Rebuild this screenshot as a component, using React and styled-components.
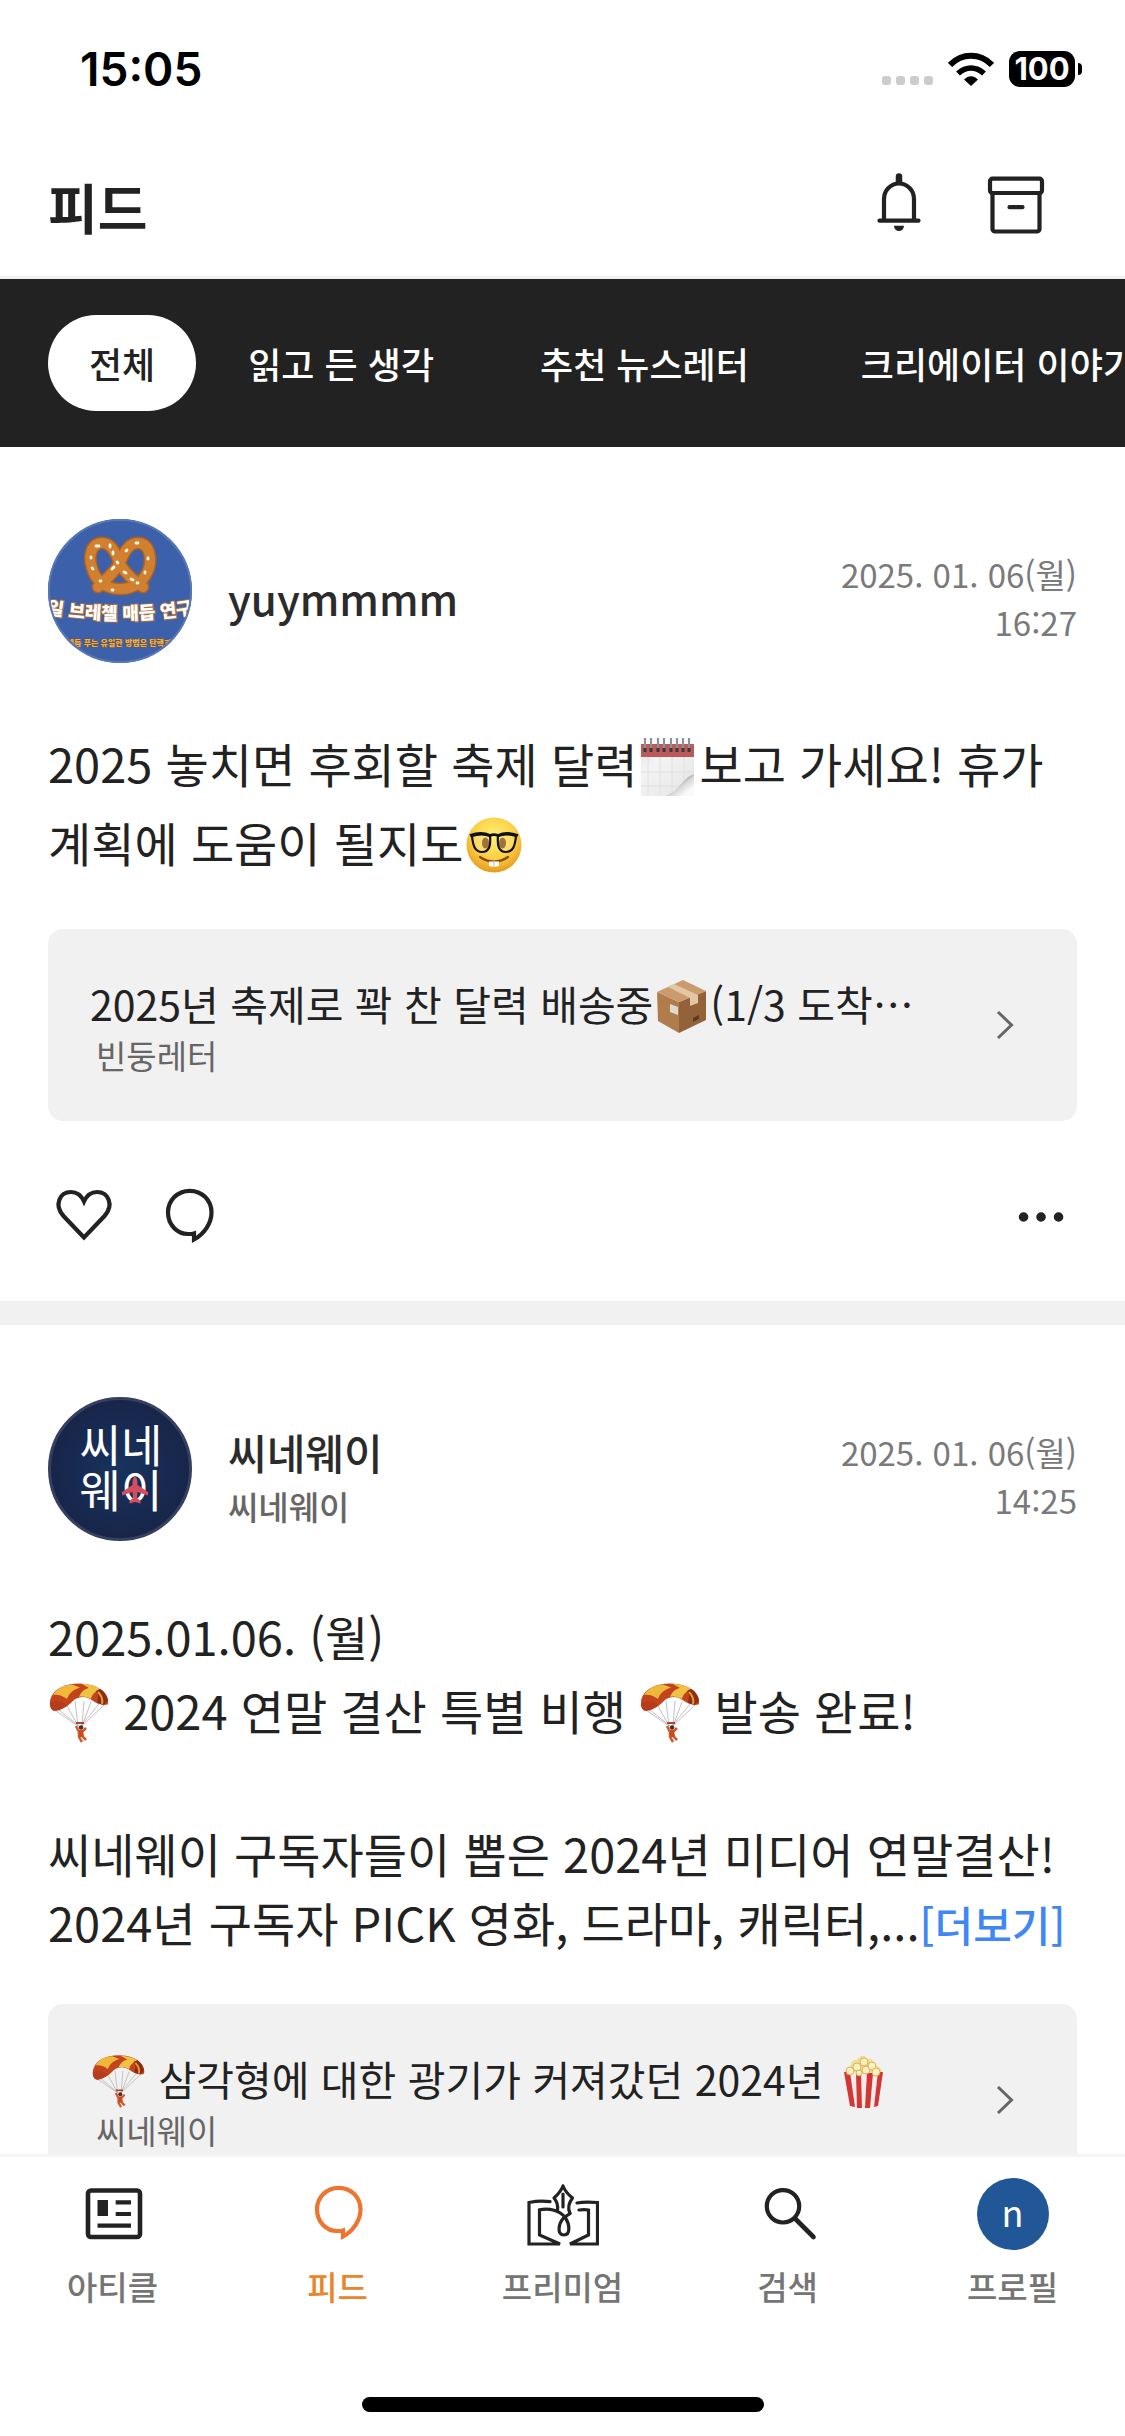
import React, { useState } from 'react';
import styled, { createGlobalStyle } from 'styled-components';

const GlobalStyle = createGlobalStyle`
  * {
    box-sizing: border-box;
    margin: 0;
    padding: 0;
  }
  body {
    background: #fff;
    color: #222;
    font-family: 'Noto Sans CJK KR', 'Noto Sans', sans-serif;
  }
  button {
    border: 0;
    background: none;
    color: inherit;
    font: inherit;
    cursor: pointer;
  }
  a {
    color: inherit;
    text-decoration: none;
  }
  svg {
    display: block;
    flex: none;
  }
`;

const StyledApp = styled.div`
  display: flex;
  flex-direction: column;
  height: 100vh;
  overflow: hidden;
`;

const StatusBar = styled.div`
  display: flex;
  justify-content: space-between;
  align-items: center;
  flex: none;
  height: 132px;
  padding: 6px 43px 0 80px;
  color: #000;
  font-family: Inter, sans-serif;
  font-size: 46px;
  font-weight: 600;
  .status {
    display: flex;
    align-items: center;
  }
  .signal {
    display: flex;
    gap: 5px;
    margin: 23px 15px 0 0;
    i {
      width: 9px;
      height: 9px;
      border-radius: 3px;
      background: #ccc;
    }
  }
  .battery {
    width: 66px;
    margin-left: 15px;
    border-radius: 11px;
    background: #000;
    color: #fff;
    font-size: 31px;
    font-weight: 700;
    line-height: 36px;
    text-align: center;
  }
  .nub {
    width: 4px;
    height: 12px;
    margin-left: 3px;
    border-radius: 0 4px 4px 0;
    background: #000;
  }
`;

const Header = styled.header`
  display: flex;
  justify-content: space-between;
  align-items: center;
  flex: none;
  height: 147px;
  padding: 0 73px 0 48px;
  border-bottom: 3px solid #f0f0f0;
  h1 {
    padding-top: 5px;
    font-size: 54px;
    font-weight: 700;
    line-height: 78px;
  }
  div {
    display: flex;
    gap: 45px;
  }
`;

const Tabs = styled.nav`
  display: flex;
  flex: none;
  gap: 12px;
  padding: 36px 48px;
  overflow: hidden;
  background: #222;
`;

const Tab = styled.button`
  flex: none;
  height: 96px;
  padding: 0 ${({ $pad }) => $pad}px;
  border-radius: 48px;
  background: ${({ $on }) => ($on ? '#fff' : 'transparent')};
  color: ${({ $on }) => ($on ? '#222' : '#fff')};
  font-size: 36px;
  font-weight: 500;
`;

const Feed = styled.main`
  flex: 1;
  min-height: 0;
  overflow-y: auto;
  scrollbar-width: none;
`;

const StyledPost = styled.article`
  padding: 72px 48px 48px;
  border-bottom: 24px solid #f1f1f1;
`;

const PostHead = styled.div`
  display: flex;
  align-items: center;
  gap: 36px;
  height: 144px;
  .writer {
    flex: 1;
    padding-top: 14px;
    color: #2b2b2b;
  }
  h2 {
    font-size: 42px;
    font-weight: 500;
    line-height: 60px;
  }
  p {
    color: #666;
    font-size: 33px;
    font-weight: 500;
    line-height: 48px;
  }
  time {
    padding-top: 14px;
    color: #7a7a7a;
    font-size: 33px;
    line-height: 48px;
    text-align: right;
  }
`;

const PostBody = styled.div`
  padding: 60px 0 48px;
  font-size: 47px;
  line-height: 69px;
  word-break: keep-all;
  p {
    min-height: 69px;
  }
  a {
    color: #3f87f2;
    font-size: 42px;
    font-weight: 500;
    line-height: 48px;
  }
`;

const Emoji = styled.svg`
  display: inline-block;
  width: ${({ $small }) => ($small ? 53 : 60)}px;
  height: ${({ $small }) => ($small ? 53 : 60)}px;
  margin: ${({ $small }) => ($small ? '0 2px' : '13px 1px 6px')};
  vertical-align: ${({ $small }) => ($small ? -12 : -19)}px;
`;

const ArticleCard = styled.a`
  display: flex;
  align-items: center;
  height: 192px;
  padding: 0 48px 0 42px;
  border-radius: 15px;
  background: #f1f1f1;
  .text {
    flex: 1;
    min-width: 0;
  }
  strong {
    display: block;
    height: 60px;
    font-size: 41px;
    font-weight: 400;
    line-height: 60px;
    white-space: nowrap;
  }
  span {
    display: block;
    padding-left: 6px;
    color: #666;
    font-size: 33px;
    line-height: 44px;
  }
`;

const Actions = styled.div`
  display: flex;
  gap: 33px;
  height: 72px;
  margin-top: 60px;
  .more {
    margin-left: auto;
  }
`;

const TabBar = styled.nav`
  flex: none;
  border-top: 3px solid #f5f5f5;
  background: #fff;
  ul {
    display: flex;
    padding-top: 21px;
    list-style: none;
  }
  li {
    flex: 1;
  }
`;

const TabItem = styled.a`
  display: flex;
  flex-direction: column;
  align-items: center;
  gap: 12px;
  color: ${({ $on }) => ($on ? '#e8862e' : '#757575')};
  font-size: 33px;
  font-weight: 500;
  line-height: 48px;
`;

const Profile = styled.span`
  width: 72px;
  height: 72px;
  border-radius: 50%;
  background: #225797;
  color: #fff;
  font-size: 36px;
  font-weight: 400;
  line-height: 66px;
  text-align: center;
`;

const HomeIndicator = styled.div`
  width: 402px;
  height: 15px;
  margin: 87px auto 24px;
  border-radius: 8px;
  background: #000;
`;

const Icon = ({ children, color = '#222' }) => (
  <svg width='72' height='72' viewBox='0 0 72 72' fill='none' stroke={color} strokeWidth='4.2' strokeLinecap='round' strokeLinejoin='round' aria-hidden='true'>
    {children}
  </svg>
);

const BellIcon = () => (
  <Icon>
    <path d='M36 8.5v5' strokeWidth='6.5' />
    <path d='M21 52.5V31a15 15.5 0 0 1 30 0v21.5M16.5 52.7h39' />
    <path d='M31 57.7h10a5 5.3 0 0 1-10 0z' fill='#222' stroke='none' />
  </Icon>
);

const ArchiveIcon = () => (
  <Icon>
    <rect x='10' y='10.7' width='52' height='14.3' rx='2.5' />
    <path d='M12.5 25v36a2.5 2.5 0 0 0 2.5 2.5h42a2.5 2.5 0 0 0 2.5-2.5V25M29.5 39.2h13' />
  </Icon>
);

const HeartIcon = () => (
  <Icon>
    <path d='M36 56.5 15.5 35C5.5 23.5 12 11 23 11c6.5 0 10.5 4 13 9.5C38.5 15 42.5 11 49 11c11 0 17.5 12.5 7.5 24z' strokeLinejoin='miter' />
  </Icon>
);

const BubbleIcon = ({ color }) => (
  <Icon color={color}>
    <path d='M36.8 9.8C24.5 9.8 15 19.3 15 31.5c0 12.5 9.5 21.5 20 21.5 2.2 0 4 0 6-.6v6.1C51 53 58.5 42.5 58.5 31.5c0-12.2-9.4-21.7-21.7-21.7z' strokeLinejoin='miter' />
  </Icon>
);

const ArticleIcon = () => (
  <Icon>
    <rect x='11' y='12.5' width='52' height='46.5' rx='3' strokeWidth='4.6' />
    <path d='M20.5 22h10.5v16H20.5z' fill='#222' stroke='none' />
    <path d='M38.7 24.3H54M38.7 36H54M20.5 47.7H54' strokeLinecap='butt' />
  </Icon>
);

const PremiumIcon = () => (
  <Icon>
    <g strokeWidth='3.2' strokeLinejoin='miter'>
      <path d='M23 23.7C16 22.5 9 23 2 24.5V66h31L12.500 57V31.800C22 30 33 32 38.500 40c4 6 5.500 17-1.700 17-7 0-5.500-11-.3-17l6.500-4.500' />
      <path d='M50 25c7-1.500 14-1 20.500-.5V66H43l18.500-9V32c-3-.5-6-.4-9.500 0' />
      <path d='M36 8c-2 5-5 8.500-9 12 3.500 4 4 8 3.500 12M36 8c2 5 5 8.500 9.500 12-4 5-5 10-2.500 15.500M36 16v13' strokeLinejoin='round' />
    </g>
  </Icon>
);

const SearchIcon = () => (
  <Icon>
    <circle cx='31' cy='28.3' r='16.2' />
    <path d='m43 40.5 18.500 18.500' strokeWidth='4.6' />
  </Icon>
);

const Chevron = () => (
  <svg width='48' height='48' viewBox='0 0 48 48' fill='none' stroke='#666' strokeWidth='3' aria-hidden='true'>
    <path d='m17 11 13.5 13L17 37' />
  </svg>
);

const Calendar = () => (
  <Emoji viewBox='0 0 60 60' aria-hidden='true'>
    <defs>
      <linearGradient id='page' x1='0' y1='0' x2='1' y2='1'>
        <stop offset='0' stopColor='#e2e2e2' />
        <stop offset='0.3' stopColor='#f4f4f4' />
        <stop offset='1' stopColor='#e4e4e4' />
      </linearGradient>
      <linearGradient id='curl' x1='0.3' y1='0.3' x2='0.8' y2='0.8'>
        <stop offset='0' stopColor='#666' />
        <stop offset='0.5' stopColor='#d6d6d6' />
        <stop offset='1' stopColor='#fafafa' />
      </linearGradient>
    </defs>
    <path d='M3 8h53v52H3z' fill='url(#page)' />
    <path d='M3 8h53v13H3z' fill='#bb5a5a' />
    <path d='M10 21v38M22 21v38M34 21v38M46 21v28M3 36h51M3 50h40' stroke='#e0e0e0' fill='none' />
    <path d='M56 38C46 41 41 55 28 60h28z' fill='url(#curl)' />
    <path d='M7 12v8M13 12v8M20 12v8M26 12v8M33 12v8M39 12v8M45 12v8M51 12v8' stroke='#403438' strokeWidth='3' strokeDasharray='4 9' />
    <path d='M7 2v10M13 2v10M20 2v10M26 2v10M33 2v10M39 2v10M45 2v10M51 2v10' stroke='#8c9299' strokeWidth='2.2' />
  </Emoji>
);

const Nerd = () => (
  <Emoji viewBox='0 0 60 60' aria-hidden='true'>
    <defs>
      <radialGradient id='face' cx='0.5' cy='0.35' r='0.65'>
        <stop offset='0' stopColor='#fff17a' />
        <stop offset='0.6' stopColor='#fbd043' />
        <stop offset='1' stopColor='#e89a1f' />
      </radialGradient>
    </defs>
    <circle cx='30' cy='30' r='27.5' fill='url(#face)' />
    <ellipse cx='21.5' cy='28' rx='3.5' ry='5.5' fill='#8f5a14' />
    <ellipse cx='38.5' cy='28' rx='3.500' ry='5.5' fill='#8f5a14' />
    <path d='M8 21c6-2 13-2 18 0 1 10-1 16-8 16S9 31 8 21zM34 21c5-2 12-2 18 0-1 10-3 16-10 16s-9-6-8-16z' fill='#fff' fillOpacity='0.15' stroke='#111' strokeWidth='2.2' />
    <path d='M6 20.5c8-3 15-2.5 20 0 3-1.2 5-1.2 8 0 5-2.500 12-3 20 0' fill='none' stroke='#111' strokeWidth='2.8' />
    <path d='M16 42c8 6 20 6 28 0' fill='none' stroke='#8a4b12' strokeWidth='2.2' strokeLinecap='round' />
    <path d='M25 46.500h10V51q-5 1.500-10 0z' fill='#fff' />
    <path d='M30 46.5v5' stroke='#bbb' />
  </Emoji>
);

const Parachute = ({ small }) => (
  <Emoji $small={small} viewBox='0 0 60 60' aria-hidden='true'>
    <path d='M3 25 29 43 17 21M56 21 33 43l9-24M29 43l-3-25M33 43l2-25M10 27l20 16M50 21 32 43' stroke='#b9b9bd' strokeWidth='0.9' fill='none' />
    <path d='M1 22C0 12 8 4 20 1.5c13-3 30 0 36 9 3 5 4 8 2.5 11-6 1-11-1-15-4-7-5-13-4-18-1-5 5-9 9-16 10C4 28 1.5 26 1 22z' fill='#c2431c' />
    <path d='M4 12C8 5 16 1.5 23 1.5l8 3C24 7 20 10 18 16 13 12 8 11 4 12z' fill='#efb83a' />
    <path d='M33 1c7 0 14 2 18 5-4 2-8 5-9 10-4-2-8-3-12-2 2-5 5-8 10-9z' fill='#f1c143' />
    <path d='M51 6c4 2 7 6 8 11l-4 5-7-2c1-5 2-9-1-12z' fill='#8f2b17' />
    <path d='M49 9c3 3 5 8 4 12' stroke='#e0a32f' strokeWidth='2' fill='none' />
    <path d='M1 20c5-3 12-2 17 2-3 3-8 6-12 6-3 0-5-3-5-8z' fill='#b53c1d' />
    <path d='M27 40h8' stroke='#b2452a' strokeWidth='2' />
    <circle cx='32' cy='44.5' r='2.3' fill='#4b302a' />
    <path d='m27 43 3 6v5l3 5M37 45l-4 4 1 5 3 3' stroke='#cf5a2c' strokeWidth='2.5' fill='none' />
    <path d='M30 47h4v7h-4z' fill='#c94b22' />
  </Emoji>
);

const Parcel = () => (
  <Emoji $small viewBox='0 0 53 53' aria-hidden='true'>
    <path d='M2 12 24 22v31L3 41z' fill='#b07c4c' />
    <path d='M24 22 51 11v29L24 53z' fill='#946238' />
    <path d='M2 12 28 0l23 11-27 11z' fill='#c99b6d' />
    <path d='m13 7 6-3 24 11v8l-8 3v-8z' fill='#e2c7a2' />
    <path d='m15 24 8 3v8l-8-3z' fill='#dfd9d0' />
    <path d='m38 38 6-3v4l-6 3z' fill='#5d3a1e' />
  </Emoji>
);

const Popcorn = () => (
  <Emoji $small viewBox='0 0 53 53' aria-hidden='true'>
    <path d='M8 19c0-6 4-7 6-9 0-5 4-5 6-5 3-5 8-6 10-1 5-1 7 2 7 6 6 1 8 4 8 9z' fill='#f3dc93' />
    <path d='M7 17h39l-5 34c-8 3-20 3-28 0z' fill='#f4ece8' />
    <path d='M7 17h6l5 35-5-1zM19 18h5l1 35h-5zM30 18h6l-3 35h-5zM41 17h5l-5 34-4 1z' fill='#d43535' />
    <g fill='#fbf0bd' stroke='#cfa64d' strokeWidth='0.8'>
      <circle cx='13' cy='16' r='4' />
      <circle cx='20' cy='12' r='4' />
      <circle cx='27' cy='7' r='4' />
      <circle cx='29' cy='15' r='4' />
      <circle cx='35' cy='11' r='4' />
      <circle cx='39' cy='17' r='4' />
      <circle cx='22' cy='18' r='3' />
    </g>
  </Emoji>
);

const PretzelAvatar = () => (
  <svg width='144' height='144' viewBox='0 0 144 144' aria-hidden='true'>
    <defs>
      <clipPath id='round'>
        <circle cx='72' cy='72' r='72' />
      </clipPath>
      <path id='arc' d='M-16 92Q72 110 160 92' />
      <path id='knot' d='M50 68C58 60 66 54 71 45 76 34 80 24 90 24c11 0 14 14 11 25C97 61 88 70 72 70 56 70 47 60 44 49 40 38 43 24 54 24c10 0 14 11 18 21 6 11 15 17 23 23' />
    </defs>
    <g clipPath='url(#round)'>
      <path d='M0 0h144v144H0z' fill='#3c60a9' />
      <g fill='none' strokeLinecap='round'>
        <use href='#knot' stroke='#a9602a' strokeWidth='13' />
        <use href='#knot' stroke='#d0802f' strokeWidth='10' />
        <path d='M48 27h3M62 26v2M43 38v1M44 49l1 1M52 62h1M64 50l2-2M65 33v2M69 43l1 1M78 32l1-1M88 24h2M100 39v1M97 53v1M76 53l2 1M83 60l2 1M89 64h1M64 71h1' stroke='#fff8e6' strokeWidth='2.8' />
      </g>
      <text fill='#fff' stroke='#a87440' strokeWidth='2' paintOrder='stroke' fontSize='18' fontWeight='900' textAnchor='middle'>
        <textPath href='#arc' startOffset='50%'>
          독일 브레첼 매듭 연구소
        </textPath>
      </text>
      <text x='71' y='127' fill='#f0b050' stroke='#6b5340' strokeWidth='1' paintOrder='stroke' fontSize='8' fontWeight='900' textAnchor='middle'>
        매듭 푸는 유일한 방법은 탄핵과
      </text>
    </g>
    <circle cx='72' cy='72' r='71' fill='none' stroke='#5877b5' strokeWidth='2' />
  </svg>
);

const CinewayAvatar = () => (
  <svg width='144' height='144' viewBox='0 0 144 144' aria-hidden='true'>
    <defs>
      <radialGradient id='night'>
        <stop offset='0' stopColor='#17335f' />
        <stop offset='1' stopColor='#182549' />
      </radialGradient>
    </defs>
    <circle cx='72' cy='72' r='70.5' fill='url(#night)' stroke='#36415f' strokeWidth='3' />
    <g fill='#fff' fontSize='45' textAnchor='middle'>
      <text x='73' y='66'>
        씨네
      </text>
      <text x='73' y='111'>
        웨이
      </text>
    </g>
    <path d='M87 80c2 0 2.5 3 2.5 8L100 95v3.5l-10.5-3.5-.5 6 3.5 3v2.5l-5.5-1.5-5.5 1.5V104l3.5-3-.5-6L74 98.5V95l10.500-7c0-5 .5-8 2.500-8z' fill='#d44d5c' />
  </svg>
);

const TABS = [
  { name: '전체', pad: 41 },
  { name: '읽고 든 생각', pad: 40 },
  { name: '추천 뉴스레터', pad: 54 },
  { name: '크리에이터 이야기', pad: 46 },
];

const MENUS = [
  { name: '아티클', icon: <ArticleIcon /> },
  { name: '피드', icon: <BubbleIcon color='#ee7430' />, on: true },
  { name: '프리미엄', icon: <PremiumIcon /> },
  { name: '검색', icon: <SearchIcon /> },
  { name: '프로필', icon: <Profile>n</Profile> },
];

function Post({ avatar, name, letter, time, card, from, children }) {
  return (
    <StyledPost>
      <PostHead>
        {avatar}
        <div className='writer'>
          <h2>{name}</h2>
          {letter && <p>{letter}</p>}
        </div>
        <time>
          2025. 01. 06(월)
          <br />
          {time}
        </time>
      </PostHead>
      <PostBody>{children}</PostBody>
      <ArticleCard href='#article'>
        <div className='text'>
          <strong>{card}</strong>
          <span>{from}</span>
        </div>
        <Chevron />
      </ArticleCard>
      <Actions>
        <button type='button' aria-label='좋아요'>
          <HeartIcon />
        </button>
        <button type='button' aria-label='댓글'>
          <BubbleIcon />
        </button>
        <button type='button' aria-label='메뉴' className='more'>
          <Icon>
            <path d='M18.500 36h.1M36 36h.1M53.500 36h.1' strokeWidth='9.5' />
          </Icon>
        </button>
      </Actions>
    </StyledPost>
  );
}

function App() {
  const [tab, setTab] = useState('전체');

  return (
    <StyledApp lang='ko'>
      <GlobalStyle />
      <StatusBar>
        <span>15:05</span>
        <div className='status'>
          <div className='signal'>
            <i />
            <i />
            <i />
            <i />
          </div>
          <svg width='46' height='34' viewBox='0 0 46 34' fill='none' stroke='#000' aria-hidden='true'>
            <path d='M2 13C14 .8 32 .8 44 13' strokeWidth='6' />
            <path d='M10 21.5c8-7.5 18-7.5 26 0' strokeWidth='5.5' />
            <path d='M16 27.5c4.5-4.5 9.500-4.500 14 0L23 34z' fill='#000' stroke='none' />
          </svg>
          <span className='battery'>100</span>
          <span className='nub' />
        </div>
      </StatusBar>

      <Header>
        <h1>피드</h1>
        <div>
          <button type='button' aria-label='알림'>
            <BellIcon />
          </button>
          <button type='button' aria-label='보관함'>
            <ArchiveIcon />
          </button>
        </div>
      </Header>

      <Tabs>
        {TABS.map(({ name, pad }) => (
          <Tab key={name} type='button' $pad={pad} $on={tab === name} onClick={() => setTab(name)}>
            {name}
          </Tab>
        ))}
      </Tabs>

      <Feed>
        <Post
          avatar={<PretzelAvatar />}
          name='yuymmmm'
          time='16:27'
          card={
            <>
              2025년 축제로 꽉 찬 달력 배송중
              <Parcel />
              (1/3 도착…
            </>
          }
          from='빈둥레터'
        >
          <p>
            2025 놓치면 후회할 축제 달력
            <Calendar />
            보고 가세요! 휴가 계획에 도움이 될지도
            <Nerd />
          </p>
        </Post>

        <Post
          avatar={<CinewayAvatar />}
          name='씨네웨이'
          letter='씨네웨이'
          time='14:25'
          card={
            <>
              <Parachute small /> 삼각형에 대한 광기가 커져갔던 2024년 <Popcorn />
            </>
          }
          from='씨네웨이'
        >
          <p>2025.01.06. (월)</p>
          <p>
            <Parachute /> 2024 연말 결산 특별 비행 <Parachute /> 발송 완료!
          </p>
          <p />
          <p>씨네웨이 구독자들이 뽑은 2024년 미디어 연말결산!</p>
          <p>
            2024년 구독자 PICK 영화, 드라마, 캐릭터,...<a href='#more'>[더보기]</a>
          </p>
        </Post>
      </Feed>

      <TabBar>
        <ul>
          {MENUS.map(({ name, icon, on }) => (
            <li key={name}>
              <TabItem href={`#${name}`} $on={on}>
                {icon}
                {name}
              </TabItem>
            </li>
          ))}
        </ul>
        <HomeIndicator />
      </TabBar>
    </StyledApp>
  );
}

export default App;
